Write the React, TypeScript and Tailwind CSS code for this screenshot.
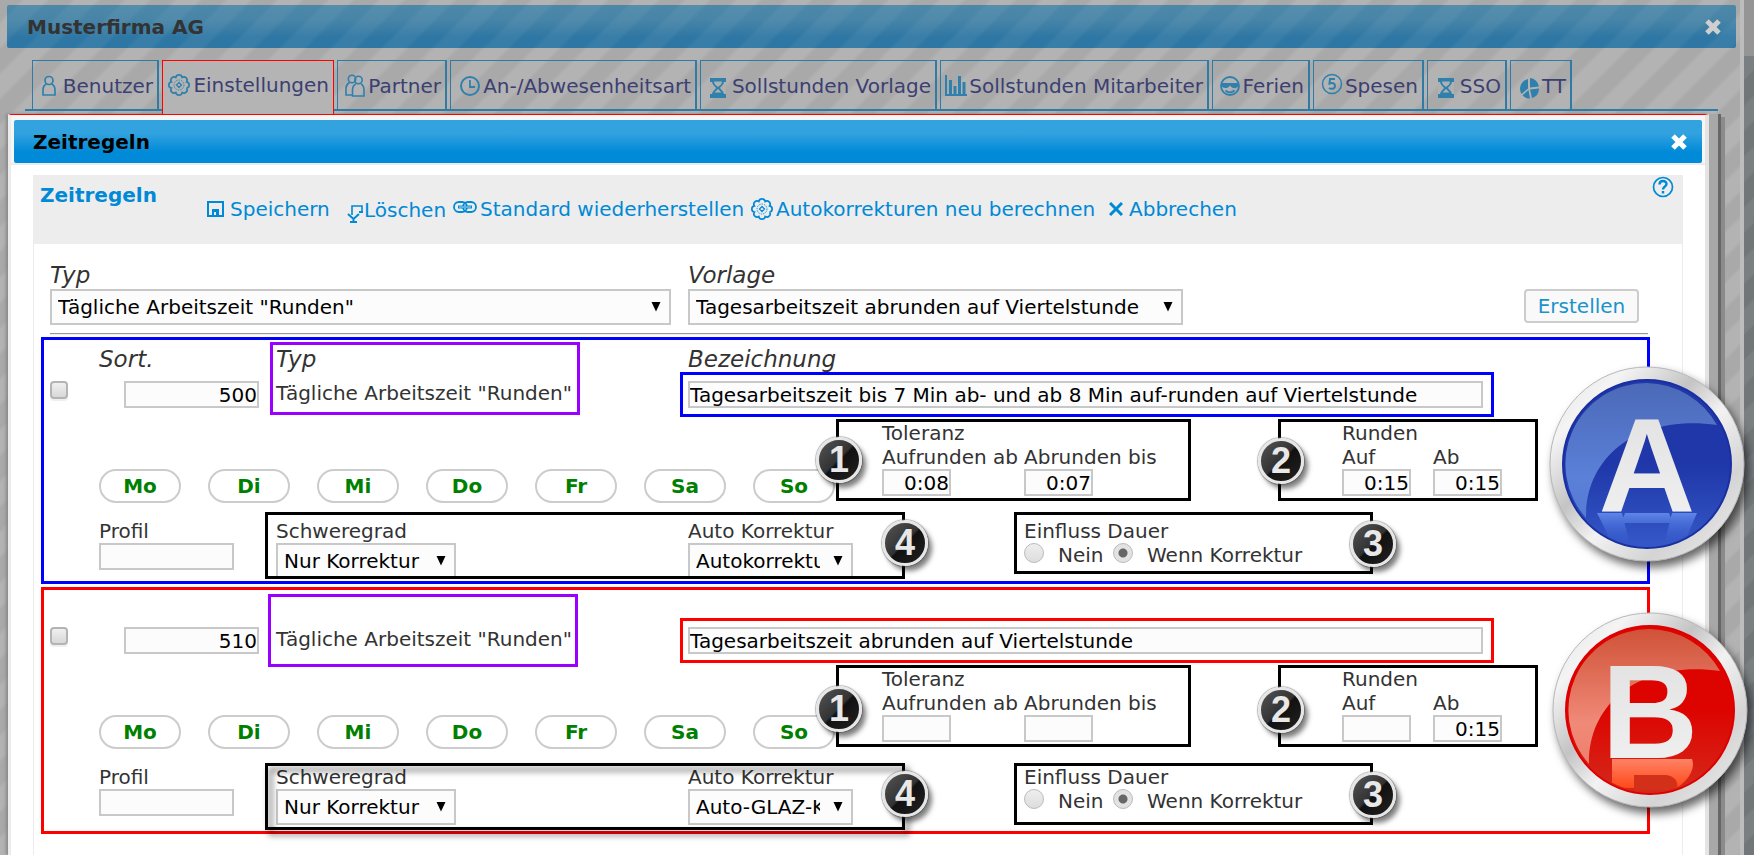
import React from 'react';
import clsx from 'clsx';

const stripes =
  '[background-image:repeating-linear-gradient(135deg,#a9a9a9_0px,#a9a9a9_14px,#b3b3b3_18px,#b3b3b3_32px,#a9a9a9_36px)] bg-fixed';

// scalloped outline of the gear icon
const gearPath = Array.from({ length: 9 }, (_, i) => {
  const a = (i * Math.PI) / 4 + Math.PI / 8;
  const x = (12 + 8.2 * Math.cos(a)).toFixed(2);
  const y = (12 + 8.2 * Math.sin(a)).toFixed(2);
  return i === 0 ? `M${x} ${y}` : `A3.2 3.2 0 0 1 ${x} ${y}`;
}).join(' ');

function GearIcon() {
  return <svg viewBox="0 0 24 24" className="w-6 h-6 shrink-0" fill="none" stroke="currentColor">
      <path d={gearPath} strokeWidth="1.700" />
      <circle cx="12" cy="12" r="5" strokeWidth="0.900" strokeDasharray="1.500 1" />
      <path d="M12 9.500L14.500 12L12 14.500L9.500 12Z" strokeWidth="1.300" />
    </svg>;
}

function UserIcon() {
  return <svg viewBox="0 0 16 22" className="w-4 h-[22px] shrink-0" fill="none" stroke="currentColor" strokeWidth="1.700">
      <circle cx="8" cy="5.500" r="4" />
      <path d="M5.500 9C3 10 2 12 2 15V20H14V15C14 12 13 10 10.500 9" />
    </svg>;
}

function UsersIcon() {
  return <svg viewBox="0 0 22 24" className="w-[22px] h-6 shrink-0" fill="none" stroke="currentColor" strokeWidth="1.600">
      <circle cx="8" cy="5" r="3.700" />
      <circle cx="14.500" cy="6" r="3.700" />
      <path d="M5.500 8.500C3 10 2 12 2 14V21H8" />
      <path d="M12 10C9.500 11 8.500 13 8.500 16V22H20V16C20 13 19 11 17 10" />
    </svg>;
}

function ClockIcon() {
  return <svg viewBox="0 0 22 22" className="w-[22px] h-[22px] shrink-0" fill="none" stroke="currentColor">
      <circle cx="11" cy="11" r="9" strokeWidth="2" />
      <path d="M11 5V12H16" strokeWidth="1.800" />
    </svg>;
}

function HourglassIcon() {
  return <svg viewBox="0 0 16 20" className="w-4 h-5 mt-[3px] shrink-0">
      <path d="M0 0H16V20H0Z" fill="currentColor" />
      <path d="M0 4H2C2.500 7 5 8.500 6 10C5 11.500 2.500 13 2 16H0ZM16 4H14C13.500 7 11 8.500 10 10C11 11.500 13.500 13 14 16H16Z" fill="#b0b0b0" />
      <path d="M4 3.500H12C12 6 10 7.500 8 9C6 7.500 4 6 4 3.500Z" fill="#b0b0b0" />
      <path d="M8 11L11.500 14.500H4.500Z" fill="#b0b0b0" />
    </svg>;
}

function ChartIcon() {
  return <svg viewBox="0 0 22 22" className="w-[22px] h-[22px] shrink-0" fill="none" stroke="currentColor">
      <path d="M1 0V20H22" strokeWidth="2" />
      <path d="M5.500 5V20M10 11V20M14.500 1V20M19 7V20" strokeWidth="3" />
    </svg>;
}

function FaceIcon() {
  return <svg viewBox="0 0 22 22" className="w-[22px] h-[22px] shrink-0" fill="none" stroke="currentColor">
      <circle cx="11" cy="11" r="9" strokeWidth="1.800" />
      <path d="M2 8H20V10C19 14 13 14 11 10.500C9 14 3 14 2 10Z" fill="currentColor" stroke="none" />
      <path d="M6.500 15.500C9 18 13 18 15.500 15.500" strokeWidth="1.800" />
    </svg>;
}

function CoinIcon() {
  return <svg viewBox="0 0 22 22" className="w-[22px] h-[22px] mb-1 shrink-0" fill="none" stroke="currentColor">
      <circle cx="11" cy="11" r="9.500" strokeWidth="1.500" />
      <path d="M14 6H9L8.500 10.500C11 9.500 14 10 14 13C14 16 10 16.500 8 15" strokeWidth="2" />
    </svg>;
}

function PieIcon() {
  return <svg viewBox="0 0 22 22" className="w-[22px] h-[22px] mt-[3px] shrink-0" fill="currentColor">
      <path d="M12 1A10 10 0 0 1 21 9.500L12 10.500Z" />
      <path d="M10 2V11.500L3.500 17A10 10 0 0 1 10 2Z" />
      <path d="M12 12.500L21 11.500A10 10 0 0 1 14 21Z" />
      <path d="M10.500 13L12 21.500A10 10 0 0 1 4.500 18.300Z" />
    </svg>;
}

function CloseIcon() {
  return <svg viewBox="0 0 16 16" className="w-4 h-4" fill="none" stroke="currentColor" strokeWidth="5">
      <path d="M2 2L14 14M14 2L2 14" />
    </svg>;
}

const tabs = [
  { label: 'Benutzer', icon: <UserIcon />, width: 'w-[127px]', gap: 'gap-[6px]' },
  { label: 'Einstellungen', icon: <GearIcon />, width: 'w-[172px]', gap: 'gap-[2px]', active: true },
  { label: 'Partner', icon: <UsersIcon />, width: 'w-[110px]', gap: 'gap-[2px]' },
  { label: 'An-/Abwesenheitsart', icon: <ClockIcon />, width: 'w-[247px]', gap: 'gap-[2px]' },
  { label: 'Sollstunden Vorlage', icon: <HourglassIcon />, width: 'w-[237px]', gap: 'gap-[6px]' },
  { label: 'Sollstunden Mitarbeiter', icon: <ChartIcon />, width: 'w-[269px]', gap: 'gap-[2px]' },
  { label: 'Ferien', icon: <FaceIcon />, width: 'w-[98px]', gap: 'gap-[2px]' },
  { label: 'Spesen', icon: <CoinIcon />, width: 'w-[111px]', gap: 'gap-[2px]' },
  { label: 'SSO', icon: <HourglassIcon />, width: 'w-[80px]', gap: 'gap-[6px]' },
  { label: 'TT', icon: <PieIcon />, width: 'w-[62px]', gap: 'gap-[2px]' }
];

function Tabs() {
  return <nav className="ml-[25px] mr-[22px] mt-3 h-[51px] pl-[7px] flex items-start gap-[3px] border-b-2 border-[#2f7ba6]">
      {tabs.map(tab => <a key={tab.label} href="#" className={clsx('flex justify-end items-center shrink-0 pr-1 pt-2 text-[#3c3f72]', tab.width, tab.gap, tab.active ? 'relative z-10 h-[54px] pb-[14px] border border-b-0 border-[#f00] bg-[#b4b4b4]' : 'h-[50px] pb-[7px] border border-b-0 border-r-2 border-[#2f7ba6]')}>
          <span className="text-[#2f80ad]">{tab.icon}</span>
          <span className="whitespace-nowrap leading-6">{tab.label}</span>
        </a>)}
    </nav>;
}

function Toolbar() {
  return <div className="flex h-[69px] bg-[#ededed] text-[#0089d6] pl-[7px] pr-[9px]">
      <h2 className="w-[167px] pt-2 font-bold leading-6">Zeitregeln</h2>
      <div className="flex items-start pt-[22px] leading-6 whitespace-nowrap">
        <button className="flex items-center gap-[6px] w-[140px]">
          <svg viewBox="0 0 17 16" className="w-[17px] h-4" fill="none" stroke="currentColor" strokeWidth="2">
            <path d="M1 1H16V15H1Z" />
            <path d="M5 8H12V14H5Z" fill="currentColor" stroke="none" />
            <path d="M7 11H9V14H7Z" fill="#ededed" stroke="none" />
          </svg>
          Speichern
        </button>
        <button className="flex items-center gap-px w-[106px]">
          <svg viewBox="0 0 16 18" className="w-4 h-[18px] mt-2" fill="none" stroke="currentColor" strokeWidth="2">
            <path d="M5 10V1H15V7" strokeWidth="1.600" />
            <path d="M12 7H16" />
            <path d="M1 9L6.500 14L12 9M6.500 13V17M3 17H10" />
          </svg>
          Löschen
        </button>
        <button className="flex items-center gap-[3px] w-[297px]">
          <svg viewBox="0 0 24 12" className="w-6 h-3 mb-1" fill="none" stroke="currentColor">
            <rect x="1" y="1" width="13" height="10" rx="5" strokeWidth="1.800" />
            <rect x="10" y="1" width="13" height="10" rx="5" strokeWidth="1.800" />
            <path d="M5 6H19" strokeWidth="3" />
            <path d="M6 6H18" stroke="#ededed" strokeWidth="0.800" />
          </svg>
          Standard wiederherstellen
        </button>
        <button className="flex items-center gap-[2px] w-[359px]">
          <GearIcon />
          Autokorrekturen neu berechnen
        </button>
        <button className="flex items-center gap-[6px]">
          <svg viewBox="0 0 14 14" className="w-[14px] h-[14px]" fill="none" stroke="currentColor" strokeWidth="3">
            <path d="M1 1L13 13M13 1L1 13" />
          </svg>
          Abbrechen
        </button>
      </div>
      <button aria-label="Hilfe" className="ml-auto mt-px self-start">
        <svg viewBox="0 0 22 22" className="w-[22px] h-[22px]" fill="none" stroke="currentColor" strokeWidth="1.700">
          <circle cx="11" cy="11" r="9.500" />
          <path d="M7.500 8.500C7.500 4 14.500 4 14.500 8C14.500 10.500 11 10.500 11 13.500M11 15V17.500" strokeWidth="2.400" />
        </svg>
      </button>
    </div>;
}

function Select({ id, label, options, className }: { id: string; label?: string; options: string[]; className: string }) {
  return <div className={clsx('relative', className)}>
      <select id={id} aria-label={label} className="appearance-none block w-full h-9 border-2 border-[#c8c8c8] bg-[#fcfcfc] pl-[6px] pr-[31px] leading-8 text-black">
        {options.map(o => <option key={o}>{o}</option>)}
      </select>
      <svg viewBox="0 0 10 10" className="absolute right-[10px] top-[13px] w-[10px] h-[10px] pointer-events-none">
        <path d="M0.500 0H9.500L5 9.500Z" fill="#000" />
      </svg>
    </div>;
}

function Field({ id, label, value, className }: { id: string; label?: string; value: string; className: string }) {
  return <input id={id} aria-label={label} type="text" defaultValue={value} className={clsx('block h-[27px] border-2 border-[#c8c8c8] bg-[#fcfcfc] text-black', className)} />;
}

// coloured frame drawn over the form
function Frame({ className }: { className: string }) {
  return <div className={clsx('absolute border-[3px] pointer-events-none', className)} />;
}

function NumberBadge({ value, className }: { value: number; className: string }) {
  return <div className={clsx('absolute z-10 w-[46px] h-[46px] rounded-full border-[3px] border-[#e6e6e6] bg-[linear-gradient(135deg,#555_0%,#333_48%,#111_52%,#222_100%)] shadow-[4px_5px_5px_rgba(0,0,0,0.5),0_0_1px_1px_rgba(120,120,120,0.5)] flex items-center justify-center font-[Liberation_Sans,Arial,sans-serif] font-bold text-[36px] leading-10 text-[#e8e8e8]', className)}>
      {value}
    </div>;
}

function LetterBadge({ letter, className }: { letter: 'A' | 'B'; className: string }) {
  const c = letter === 'A'
    ? { edge: '#1a2fa0', base: '#1f37a8', low: '#3558c8', gloss: '#5a80d8', glossTop: '#4c69b8' }
    : { edge: '#dd0000', base: '#dd0400', low: '#d42a1c', gloss: '#f08a78', glossTop: '#d05238' };
  return <svg viewBox="0 0 196 196" className={clsx('absolute z-20 w-[196px] h-[196px] overflow-visible drop-shadow-[4px_6px_5px_rgba(0,0,0,0.6)]', className)}>
      <defs>
        <linearGradient id={`ring${letter}`} x1="0" y1="0" x2="1" y2="1">
          <stop offset="0" stopColor="#e2e2e2" />
          <stop offset="0.2" stopColor="#f4f4f4" />
          <stop offset="0.4" stopColor="#c4c4c4" />
          <stop offset="0.55" stopColor="#f2f2f2" />
          <stop offset="0.75" stopColor="#d4d4d4" />
          <stop offset="1" stopColor="#f0f0f0" />
        </linearGradient>
        <linearGradient id={`base${letter}`} x1="0" y1="0" x2="0" y2="1">
          <stop offset="0.5" stopColor={c.base} />
          <stop offset="1" stopColor={c.low} />
        </linearGradient>
        <linearGradient id={`gloss${letter}`} x1="0" y1="0" x2="0" y2="1">
          <stop offset="0" stopColor={c.glossTop} />
          <stop offset="0.7" stopColor={c.gloss} />
          <stop offset="1" stopColor={c.gloss} stopOpacity="0.9" />
        </linearGradient>
        <linearGradient id={`shine${letter}`} x1="0" y1="0" x2="0" y2="1">
          <stop offset="0" stopColor={letter === 'A' ? '#5f86e8' : '#ff8266'} />
          <stop offset="1" stopColor={letter === 'A' ? '#3d63d2' : '#ff4a18'} stopOpacity={letter === 'A' ? 0.2 : 1} />
        </linearGradient>
        <linearGradient id={`face${letter}`} x1="0" y1="0" x2="0" y2="1">
          <stop offset="0" stopColor="#e0e0e0" />
          <stop offset="1" stopColor="#f2f2f2" />
        </linearGradient>
        <clipPath id={`clip${letter}`}>
          <circle cx="98" cy="98" r="82" />
        </clipPath>
      </defs>
      <circle cx="98" cy="98" r="97" fill={`url(#ring${letter})`} stroke="#b8b8b8" />
      <circle cx="98" cy="98" r="84" fill={`url(#base${letter})`} stroke={c.edge} strokeWidth="2" />
      <g clipPath={`url(#clip${letter})`}>
        <path d="M37 152C36 90 90 48 168 59A82 82 0 0 0 98 17A81 81 0 0 0 37 152Z" fill={`url(#gloss${letter})`} />
        {letter === 'A'
          ? <path d="M48 147H73L80 175H62ZM123 147H148L136 175H116ZM76 147H120L124 157H72Z" fill="url(#shineA)" />
          : <>
              <path d="M60 147H140C144 157 135 170 124 176H60Z" fill="url(#shineB)" />
              <path d="M82 163H112C122 163 128 170 124 178H82Z" fill="#d23018" />
            </>}
      </g>
      <text x="98" y="146" textAnchor="middle" fontSize="134" fontWeight="bold" fontFamily="Liberation Sans, Arial, sans-serif" fill={`url(#face${letter})`}>
        {letter}
      </text>
    </svg>;
}

const days = ['Mo', 'Di', 'Mi', 'Do', 'Fr', 'Sa', 'So'];

interface Rule {
  id: 'A' | 'B';
  sort: string;
  name: string;
  tolUp: string;
  tolDown: string;
  roundUp: string;
  roundDown: string;
  auto: string;
}

const rules: Rule[] = [
  { id: 'A', sort: '500', name: 'Tagesarbeitszeit bis 7 Min ab- und ab 8 Min auf-runden auf Viertelstunde', tolUp: '0:08', tolDown: '0:07', roundUp: '0:15', roundDown: '0:15', auto: 'Autokorrektur' },
  { id: 'B', sort: '510', name: 'Tagesarbeitszeit abrunden auf Viertelstunde', tolUp: '', tolDown: '', roundUp: '', roundDown: '0:15', auto: 'Auto-GLAZ-Korrektur' }
];

function RuleRow({ rule }: { rule: Rule }) {
  const first = rule.id === 'A';
  const { id } = rule;
  return <section className={clsx('relative border-[3px] ml-[7px] mr-8 leading-6', first ? 'border-[#00f] pt-[6px] pb-[2px]' : 'border-[#f00] pt-[37px] pb-[6px] mt-[3px]')}>
      {first && <div className="grid grid-cols-[55px_177px_412px_1fr] mb-2 text-[23px] leading-[27px] italic">
          <span />
          <span>Sort.</span>
          <span>Typ</span>
          <span>Bezeichnung</span>
        </div>}
      <div className="grid grid-cols-[55px_177px_412px_1fr] items-start">
        <input type="checkbox" aria-label={`Regel ${rule.sort}`} className="appearance-none ml-[6px] w-[18px] h-[18px] rounded-[4px] border-2 border-[#b4b4b4] bg-linear-to-b from-[#f0f0f0] to-[#d8d8d8] shadow-[0_2px_1px_#eee]" />
        <Field id={`sort${id}`} label="Sort." value={rule.sort} className="ml-[25px] w-[135px] text-right" />
        <span>Tägliche Arbeitszeit "Runden"</span>
        <div className="relative mr-[164px]">
          <Field id={`name${id}`} label="Bezeichnung" value={rule.name} className="w-full" />
          <Frame className={clsx('-left-2 -right-[11px] -top-[9px] -bottom-[9px]', first ? 'border-[#00f]' : 'border-[#f00]')} />
        </div>
      </div>
      <div className="flex items-start pl-[55px] pt-[13px]">
        <div className="flex w-[783px] gap-[27px] pt-12">
          {days.map(d => <button key={d} className="w-[82px] h-[34px] rounded-full border-2 border-[#ccc] bg-white font-bold text-[#008000] leading-[30px]">
              {d}
            </button>)}
        </div>
        <fieldset className="w-[460px]">
          <legend>Toleranz</legend>
          <div className="flex">
            <label className="w-[142px] whitespace-nowrap">
              Aufrunden ab
              <Field id={`tolUp${id}`} value={rule.tolUp} className="w-[69px] text-right" />
            </label>
            <label className="whitespace-nowrap">
              Abrunden bis
              <Field id={`tolDown${id}`} value={rule.tolDown} className="w-[69px] text-right" />
            </label>
          </div>
        </fieldset>
        <fieldset>
          <legend>Runden</legend>
          <div className="flex">
            <label className="w-[91px]">
              Auf
              <Field id={`roundUp${id}`} value={rule.roundUp} className="w-[69px] text-right" />
            </label>
            <label>
              Ab
              <Field id={`roundDown${id}`} value={rule.roundDown} className="w-[69px] text-right" />
            </label>
          </div>
        </fieldset>
      </div>
      <div className="grid grid-cols-[177px_412px_336px_1fr] items-start pl-[55px] pt-4">
        <label>
          Profil
          <Field id={`profil${id}`} value="" className="w-[135px]" />
        </label>
        <div>
          <label htmlFor={`grad${id}`} className="block">Schweregrad</label>
          <Select id={`grad${id}`} options={['Nur Korrektur']} className="w-[180px]" />
        </div>
        <div>
          <label htmlFor={`auto${id}`} className="block">Auto Korrektur</label>
          <Select id={`auto${id}`} options={[rule.auto]} className="w-[165px]" />
        </div>
        <fieldset>
          <legend>Einfluss Dauer</legend>
          <div className="flex items-start">
            <label className="flex items-start gap-[14px] w-[89px]">
              <input type="radio" name={`dauer${id}`} className="appearance-none w-5 h-5 rounded-full border border-[#bbb] bg-linear-to-b from-[#eee] to-[#ddd]" />
              Nein
            </label>
            <label className="flex items-start gap-[14px] whitespace-nowrap">
              <input type="radio" name={`dauer${id}`} defaultChecked className="appearance-none w-5 h-5 rounded-full border border-[#bbb] bg-[radial-gradient(circle,#666_0px,#666_4px,#e2e2e2_5px)]" />
              Wenn Korrektur
            </label>
          </div>
        </fieldset>
      </div>

      <Frame className={clsx('w-[310px] h-[73px] border-[#90f]', first ? 'left-[226px] top-[2px]' : 'left-[224px] top-1')} />
      <Frame className={clsx('left-[792px] w-[355px] h-[82px] border-black', first ? 'top-[79px]' : 'top-[75px]')} />
      <Frame className={clsx('left-[1234px] w-[260px] h-[82px] border-black', first ? 'top-[79px]' : 'top-[75px]')} />
      <Frame className={clsx('left-[970px] w-[359px] h-[62px] border-black', first ? 'top-[172px]' : 'top-[173px]')} />
      <Frame className={clsx('left-[221px] w-[640px] h-[67px] border-black', first ? 'top-[172px]' : 'top-[173px] drop-shadow-[4px_5px_3px_rgba(0,0,0,0.6)]')} />
      <NumberBadge value={1} className={clsx('left-[772px]', first ? 'top-[97px]' : 'top-[96px]')} />
      <NumberBadge value={2} className={clsx('left-[1214px]', first ? 'top-[98px]' : 'top-[97px]')} />
      <NumberBadge value={3} className={clsx('left-[1306px]', first ? 'top-[181px]' : 'top-[182px]')} />
      <NumberBadge value={4} className={clsx('left-[838px]', first ? 'top-[180px]' : 'top-[181px]')} />
      <LetterBadge letter={id} className={clsx(first ? 'top-[26px] -right-[98px]' : 'top-[22px] -right-[101px]')} />
    </section>;
}

function ZeitregelnDialog() {
  return <div className="flex-1 flex flex-col min-w-0 border-t border-t-[#f00] border-l-[3px] border-l-[#ececec] border-r-4 border-r-[#e4e4e4] bg-white shadow-[-2px_0_3px_#888]">
      <div className="bg-[#f6f6f6] pt-[5px] px-[3px]">
        <header className="flex items-center justify-between h-[43px] pl-[19px] pr-[15px] pt-px rounded-[2px] bg-[linear-gradient(#33a3e0_0%,#33a3e0_30%,#008ad8_75%)]">
          <h1 className="font-bold text-black">Zeitregeln</h1>
          <button aria-label="Schliessen" className="text-white"><CloseIcon /></button>
        </header>
      </div>
      <div className="border-t-2 border-[#ececec] mb-[10px]" />
      <div className="mx-[22px] flex-1 flex flex-col">
        <Toolbar />
        <form className="flex-1 border-x border-[#ececec] pt-[18px] pb-5">
          <div className="flex items-end gap-[17px] pl-4 pr-[43px]">
            <div>
              <label htmlFor="typ" className="block text-[23px] leading-[27px] italic">Typ</label>
              <Select id="typ" options={['Tägliche Arbeitszeit "Runden"']} className="w-[621px]" />
            </div>
            <div>
              <label htmlFor="vorlage" className="block text-[23px] leading-[27px] italic">Vorlage</label>
              <Select id="vorlage" options={['Tagesarbeitszeit abrunden auf Viertelstunde']} className="w-[495px]" />
            </div>
            <button type="button" className="ml-auto mb-[2px] w-[115px] h-[34px] border-2 border-[#ccc] rounded-[4px] bg-[#f9f9f9] text-[#1a93cb]">
              Erstellen
            </button>
          </div>
          <hr className="ml-4 mr-[34px] mt-2 mb-[2px] border-t border-t-[#999] border-b border-b-[#eee]" />
          {rules.map(r => <RuleRow key={r.id} rule={r} />)}
        </form>
      </div>
    </div>;
}

export default function App() {
  return <div className={clsx("flex min-h-screen overflow-hidden font-['DejaVu_Sans',Verdana,sans-serif] text-[20px] text-[#333]", stripes)}>
      <div className="flex-1 min-w-0 flex flex-col border-r-4 border-[#bdbdbd]">
        <header className="flex items-center justify-between ml-[7px] mr-1 mt-[5px] h-[43px] pl-5 pr-[15px] rounded-[2px] [background-image:repeating-linear-gradient(135deg,rgba(255,255,255,0)_0px,rgba(255,255,255,0)_14px,rgba(255,255,255,0.05)_18px,rgba(255,255,255,0.05)_32px,rgba(255,255,255,0)_36px),linear-gradient(#4d88a8_0%,#4784a7_35%,#2e77a4_75%)] [background-attachment:fixed,scroll]">
          <h1 className="font-bold text-[#333]">Musterfirma AG</h1>
          <button aria-label="Fenster schliessen" className="text-[#cfcfcf]"><CloseIcon /></button>
        </header>
        <Tabs />
        <div className="flex-1 flex mt-[3px] ml-2">
          <ZeitregelnDialog />
          <div className="w-[9px] bg-[#a8a8a8]" />
          <div className="w-[3px] bg-[#676767]" />
          <div className="w-1 mt-[3px] mr-[15px] bg-[#8b8b8b]" />
        </div>
      </div>
      <div className="w-[10px] flex flex-col">
        <div className="h-14 bg-[#959595]" />
        <div className="flex-1 bg-[#7a7f82] [background-image:repeating-linear-gradient(135deg,rgba(0,0,0,0)_0px,rgba(0,0,0,0)_16px,rgba(0,0,0,0.07)_18px,rgba(0,0,0,0.07)_34px,rgba(0,0,0,0)_36px)]" />
      </div>
    </div>;
}
